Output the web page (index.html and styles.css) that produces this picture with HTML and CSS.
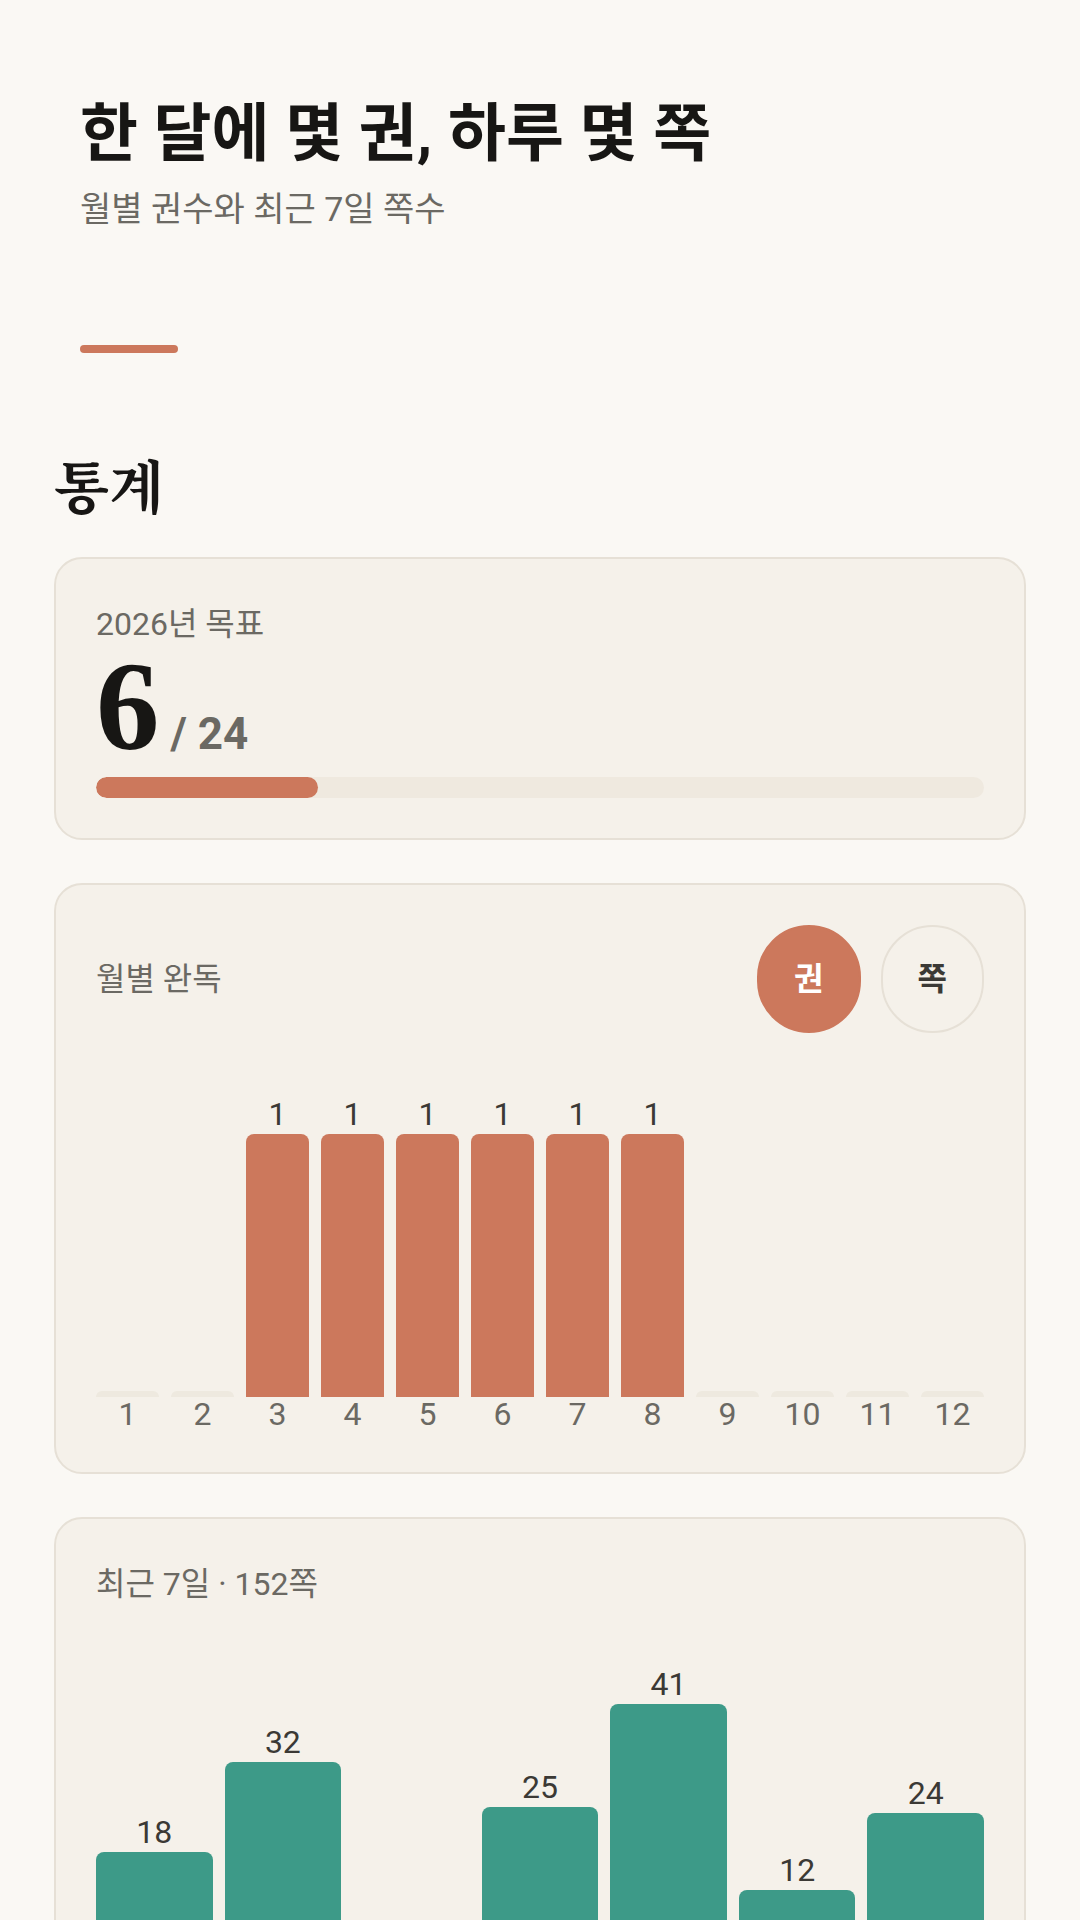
FILE: index.html
```html
<!DOCTYPE html>
<html lang="ko">
<head>
    <meta charset="UTF-8">
    <title>통계</title>
    <link rel="stylesheet" href="styles.css">
</head>
<body>
<main class="page">
    <header class="intro">
        <h1 class="title">한 달에 몇 권, 하루 몇 쪽</h1>
        <p class="subtitle">월별 권수와 최근 7일 쪽수</p>
        <div class="divider"></div>
    </header>

    <section class="stats">
        <h2 class="stats-title">통계</h2>

        <div class="card goal">
            <div class="card-label">2026년 목표</div>
            <div class="goal-count"><span class="goal-done">6</span><span class="goal-total">/ 24</span></div>
            <div class="progress"><div class="progress-fill" style="width: 25%"></div></div>
        </div>

        <div class="card">
            <div class="card-head">
                <div class="card-label">월별 완독</div>
                <div class="toggle">
                    <button class="toggle-btn active">권</button>
                    <button class="toggle-btn">쪽</button>
                </div>
            </div>
            <div class="chart months">
                <div class="col"><div class="bar empty"></div><div class="axis">1</div></div>
                <div class="col"><div class="bar empty"></div><div class="axis">2</div></div>
                <div class="col"><div class="val">1</div><div class="bar" style="height: 263px"></div><div class="axis">3</div></div>
                <div class="col"><div class="val">1</div><div class="bar" style="height: 263px"></div><div class="axis">4</div></div>
                <div class="col"><div class="val">1</div><div class="bar" style="height: 263px"></div><div class="axis">5</div></div>
                <div class="col"><div class="val">1</div><div class="bar" style="height: 263px"></div><div class="axis">6</div></div>
                <div class="col"><div class="val">1</div><div class="bar" style="height: 263px"></div><div class="axis">7</div></div>
                <div class="col"><div class="val">1</div><div class="bar" style="height: 263px"></div><div class="axis">8</div></div>
                <div class="col"><div class="bar empty"></div><div class="axis">9</div></div>
                <div class="col"><div class="bar empty"></div><div class="axis">10</div></div>
                <div class="col"><div class="bar empty"></div><div class="axis">11</div></div>
                <div class="col"><div class="bar empty"></div><div class="axis">12</div></div>
            </div>
        </div>

        <div class="card recent">
            <div class="card-head">
                <div class="card-label">최근 7일 · 152쪽</div>
            </div>
            <div class="chart days">
                <div class="col"><div class="val">18</div><div class="bar" style="height: 115px"></div></div>
                <div class="col"><div class="val">32</div><div class="bar" style="height: 205px"></div></div>
                <div class="col"><div class="bar empty"></div></div>
                <div class="col"><div class="val">25</div><div class="bar" style="height: 160px"></div></div>
                <div class="col"><div class="val">41</div><div class="bar" style="height: 263px"></div></div>
                <div class="col"><div class="val">12</div><div class="bar" style="height: 77px"></div></div>
                <div class="col"><div class="val">24</div><div class="bar" style="height: 154px"></div></div>
            </div>
        </div>
    </section>
</main>
</body>
</html>
```

FILE: styles.css
```css
*{
    padding: 0;
    margin: 0;
    box-sizing: border-box;
}
body{
    background: #faf8f4;
    color: #1a1916;
    font-family: Roboto, "Noto Sans CJK KR", sans-serif;
}
.page{
    padding: 0 54px;
}
.intro{
    padding: 96px 26px 0;
}
.title{
    font-size: 63px;
    line-height: 1.2;
    font-weight: 700;
    color: #171614;
}
.subtitle{
    margin-top: 14px;
    font-size: 34px;
    line-height: 1.4;
    color: #6b6963;
}
.divider{
    margin-top: 112px;
    width: 98px;
    height: 8px;
    border-radius: 4px;
    background: #cc785c;
}
.stats-title{
    margin-top: 102px;
    font-family: "Liberation Serif", "Noto Serif CJK KR", serif;
    font-size: 57px;
    line-height: 1.2;
    font-weight: 700;
    color: #171614;
}
.card{
    margin-top: 43px;
    padding: 40px;
    border: 2px solid #e6e0d6;
    border-radius: 28px;
    background: #f5f1ea;
}
.stats-title + .card{
    margin-top: 33px;
}
.card.goal{
    padding: 43px 40px 40px;
}
.card.recent{
    padding-top: 43px;
}
.card-label{
    font-size: 32px;
    line-height: 1.4;
    color: #6b6963;
}
.goal-count{
    height: 120px;
    line-height: 120px;
}
.goal-done{
    font-family: "Liberation Serif", serif;
    font-size: 127px;
    font-weight: 700;
    color: #171614;
}
.goal-total{
    margin-left: 11px;
    font-size: 44px;
    font-weight: 700;
    color: #6b6963;
}
.progress{
    margin-top: 11px;
    height: 21px;
    border-radius: 11px;
    background: #efe9df;
    overflow: hidden;
}
.progress-fill{
    height: 100%;
    border-radius: 11px;
    background: #cc785c;
}
.card-head{
    display: flex;
    align-items: center;
    justify-content: space-between;
}
.toggle{
    display: flex;
    gap: 20px;
}
.toggle-btn{
    padding: 34px 35px;
    border: 2px solid #e6e0d6;
    border-radius: 999px;
    background: transparent;
    font-family: Roboto, "Noto Sans CJK KR", sans-serif;
    font-size: 32px;
    line-height: 36px;
    font-weight: 700;
    color: #3b3935;
}
.toggle-btn.active{
    border-color: #cc785c;
    background: #cc785c;
    color: #fff;
}
.chart{
    display: flex;
    gap: 12px;
}
.col{
    flex: 1;
    display: flex;
    flex-direction: column;
    justify-content: flex-end;
    align-items: stretch;
}
.months .col{
    height: 399px;
}
.days .col{
    height: 360px;
}
.val{
    margin-bottom: 2px;
    text-align: center;
    font-size: 32px;
    line-height: 1.1;
    color: #3b3935;
}
.bar{
    border-radius: 8px 8px 0 0;
}
.months .bar{
    background: #cc785c;
}
.days .bar{
    background: #3d9a88;
}
.bar.empty{
    height: 6px;
    background: #eee9df;
}
.axis{
    text-align: center;
    font-size: 32px;
    line-height: 1.1;
    color: #6b6963;
}
```
